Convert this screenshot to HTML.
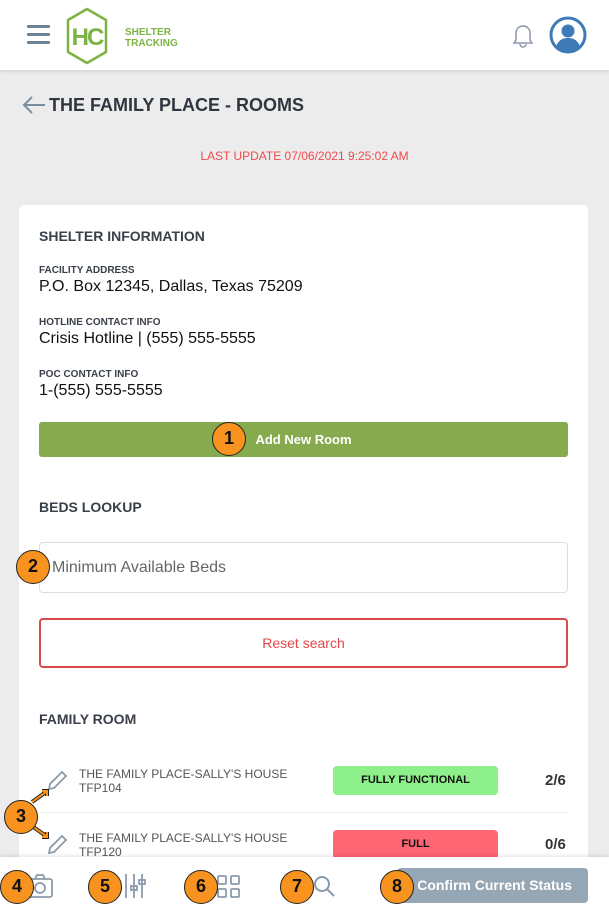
<!DOCTYPE html>
<html><head><meta charset="utf-8"><style>
*{margin:0;padding:0;box-sizing:border-box}
html,body{width:609px;height:913px;overflow:hidden}
body{background:#ececec;font-family:"Liberation Sans",sans-serif;position:relative}
.a{position:absolute}
.hdr{left:0;top:0;width:609px;height:70px;background:#fff;box-shadow:0 1px 4px rgba(0,0,0,.15)}
.card{left:19px;top:205px;width:569px;height:700px;background:#fff;border-radius:5px}
.h{font-weight:bold;color:#3a4049;font-size:14px}
.lbl{font-weight:bold;color:#3a4049;font-size:10px}
.val{color:#111;font-size:16px}
.b{width:34px;height:34px;border-radius:50%;background:#f7931e;border:1.5px solid #222;font-weight:bold;font-size:18px;color:#111;text-align:center;line-height:31px}
.room{color:#555;font-size:12px;line-height:14px}
.pill{width:165px;height:29px;border-radius:4px;font-weight:bold;font-size:11px;text-align:center;line-height:29px;color:#111}
.cnt{font-weight:bold;font-size:15px;color:#333}
</style></head><body>
<div class="a hdr"></div>
<div class="a" style="left:27px;top:25px;width:23px;height:3px;background:#6e8296;box-shadow:0 8px 0 #6e8296,0 16px 0 #6e8296;border-radius:1px"></div>
<svg class="a" style="left:64px;top:6px" width="50" height="60" viewBox="0 0 50 60"><polygon points="23,3 42,14 42,46 23,57 4,46 4,14" fill="none" stroke="#7cb342" stroke-width="2.5" stroke-linejoin="round"/><text x="23" y="39" text-anchor="middle" font-family="Liberation Sans" font-weight="bold" font-size="24" fill="#7cb342" letter-spacing="-2">HC</text></svg>
<div class="a" style="left:125px;top:27px;font-weight:bold;font-size:10px;line-height:11px;color:#7cb342">SHELTER<br>TRACKING</div>
<svg class="a" style="left:510px;top:23px" width="26" height="26" viewBox="0 0 26 26" fill="none" stroke="#8a9aab" stroke-width="1.5"><path d="M13 3c-4 0-7 3-7 7v7l-2 3h18l-2-3v-7c0-4-3-7-7-7z"/><path d="M10 21a3 3 0 0 0 6 0"/></svg>
<svg class="a" style="left:549px;top:16px" width="38" height="38" viewBox="0 0 38 38"><circle cx="19" cy="19" r="17" fill="#fff" stroke="#3f7ab8" stroke-width="3"/><circle cx="19" cy="15" r="6.5" fill="#3f7ab8"/><path d="M7 31c2-7 7-9 12-9s10 2 12 9c-3 3-8 5-12 5s-9-2-12-5z" fill="#3f7ab8"/></svg>
<svg class="a" style="left:21px;top:95px" width="26" height="20" viewBox="0 0 26 20" fill="none" stroke="#7a8ea2" stroke-width="2"><path d="M24 10H3M11 2L3 10l8 8"/></svg>
<div class="a" style="left:49px;top:95px;font-weight:bold;font-size:18px;color:#2f3640">THE FAMILY PLACE - ROOMS</div>
<div class="a" style="left:0;width:609px;top:149px;text-align:center;font-size:12px;color:#ef4b4b">LAST UPDATE 07/06/2021 9:25:02 AM</div>
<div class="a card"></div>
<div class="a h" style="left:39px;top:228px">SHELTER INFORMATION</div>
<div class="a lbl" style="left:39px;top:265px">FACILITY ADDRESS</div>
<div class="a val" style="left:39px;top:278px">P.O. Box 12345, Dallas, Texas 75209</div>
<div class="a lbl" style="left:39px;top:317px">HOTLINE CONTACT INFO</div>
<div class="a val" style="left:39px;top:330px">Crisis Hotline | (555) 555-5555</div>
<div class="a lbl" style="left:39px;top:369px">POC CONTACT INFO</div>
<div class="a val" style="left:39px;top:382px">1-(555) 555-5555</div>
<div class="a" style="left:39px;top:422px;width:529px;height:35px;background:#88aa4e;border-radius:3px;color:#fff;font-weight:bold;font-size:13px;text-align:center;line-height:35px">Add New Room</div>
<div class="a b" style="left:212px;top:422px">1</div>
<div class="a h" style="left:39px;top:499px">BEDS LOOKUP</div>
<div class="a" style="left:39px;top:542px;width:529px;height:51px;border:1px solid #ddd;border-radius:4px;font-size:16px;color:#666;line-height:49px;padding-left:12px">Minimum Available Beds</div>
<div class="a b" style="left:16px;top:550px">2</div>
<div class="a" style="left:39px;top:618px;width:529px;height:50px;border:2px solid #d94b4b;border-radius:4px;font-size:14px;color:#e04848;text-align:center;line-height:46px">Reset search</div>
<div class="a h" style="left:39px;top:711px">FAMILY ROOM</div>
<svg class="a" style="left:45px;top:767px" width="26" height="26" viewBox="0 0 26 26" fill="none" stroke="#8a9aab" stroke-width="1.8"><path d="M4 22l1-5L17 5l4 4L9 21z"/></svg>
<div class="a room" style="left:79px;top:767px">THE FAMILY PLACE-SALLY'S HOUSE<br>TFP104</div>
<div class="a pill" style="left:333px;top:766px;background:#8ef08a">FULLY FUNCTIONAL</div>
<div class="a cnt" style="left:545px;top:772px">2/6</div>
<div class="a" style="left:39px;top:812px;width:529px;height:1px;background:#eee"></div>
<svg class="a" style="left:45px;top:831px" width="26" height="26" viewBox="0 0 26 26" fill="none" stroke="#8a9aab" stroke-width="1.8"><path d="M4 22l1-5L17 5l4 4L9 21z"/></svg>
<div class="a room" style="left:79px;top:831px">THE FAMILY PLACE-SALLY'S HOUSE<br>TFP120</div>
<div class="a pill" style="left:333px;top:830px;background:#ff6673">FULL</div>
<div class="a cnt" style="left:545px;top:836px">0/6</div>
<svg class="a" style="left:28px;top:788px" width="24" height="52" viewBox="0 0 24 52"><path d="M4 14L18 4M14 3l5 0 0 5M4 38L18 48M14 49l5 0 0-5" stroke="#222" stroke-width="4" fill="none"/><path d="M4 14L18 4M14 3l5 0 0 5M4 38L18 48M14 49l5 0 0-5" stroke="#f7931e" stroke-width="2" fill="none"/></svg>
<div class="a b" style="left:4px;top:800px">3</div>
<div class="a" style="left:0;top:857px;width:609px;height:56px;background:#fff;box-shadow:0 -1px 4px rgba(0,0,0,.12)"></div>
<svg class="a" style="left:26px;top:873px" width="28" height="26" viewBox="0 0 28 26" fill="none" stroke="#8a9aab" stroke-width="1.8"><rect x="2" y="6" width="24" height="18" rx="2"/><circle cx="14" cy="15" r="5"/><path d="M9 6l2-4h6l2 4"/></svg>
<svg class="a" style="left:120px;top:872px" width="28" height="28" viewBox="0 0 28 28" fill="none" stroke="#8a9aab" stroke-width="1.8"><path d="M6 2v24M14 2v24M22 2v24"/><rect x="11" y="14" width="6" height="4"/><rect x="19" y="8" width="6" height="4"/></svg>
<svg class="a" style="left:216px;top:874px" width="26" height="26" viewBox="0 0 26 26" fill="none" stroke="#8a9aab" stroke-width="1.8"><rect x="2" y="2" width="8" height="8" rx="1"/><rect x="15" y="2" width="8" height="8" rx="1"/><rect x="2" y="15" width="8" height="8" rx="1"/><rect x="15" y="15" width="8" height="8" rx="1"/></svg>
<svg class="a" style="left:311px;top:873px" width="26" height="26" viewBox="0 0 26 26" fill="none" stroke="#8a9aab" stroke-width="2"><circle cx="11" cy="11" r="7"/><path d="M16 16l7 7"/></svg>
<div class="a" style="left:397px;top:868px;width:191px;height:35px;background:#95a6b5;border-radius:4px;color:#fff;font-weight:bold;font-size:14px;line-height:35px;text-align:right;padding-right:16px">Confirm Current Status</div>
<div class="a b" style="left:0px;top:870px">4</div>
<div class="a b" style="left:88px;top:870px">5</div>
<div class="a b" style="left:184px;top:870px">6</div>
<div class="a b" style="left:280px;top:870px">7</div>
<div class="a b" style="left:380px;top:870px">8</div>
</body></html>
